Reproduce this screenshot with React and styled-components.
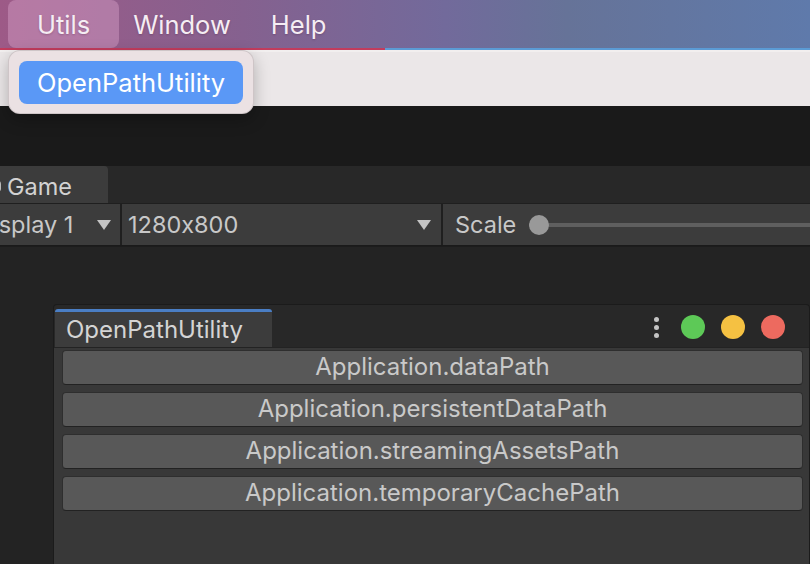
import React from "react";
import styled, { createGlobalStyle } from "styled-components";

const Global = createGlobalStyle`
  html, body { margin: 0; padding: 0; background: #191919; }
  body {
    font-family: Inter, "Noto Sans", sans-serif;
    font-feature-settings: "calt" 0;
  }
`;

const Screen = styled.div`
  position: relative;
  width: 810px;
  height: 564px;
  overflow: hidden;
  display: flex;
  flex-direction: column;
  background: #191919;
`;

/* ---------- system menu bar ---------- */
const MenuBar = styled.div`
  flex: none;
  height: 48px;
  display: flex;
  align-items: stretch;
  padding-left: 8px;
  background: linear-gradient(90deg, #9d5a87 0%, #85618f 30%, #726a9b 55%, #667398 70%, #5f7aab 100%);
`;

const MenuItem = styled.div`
  display: flex;
  align-items: center;
  padding: 0 ${(p) => (p.$active ? 29 : 20)}px;
  margin-right: ${(p) => (p.$active ? -6 : 0)}px;
  border-radius: 8px;
  background: ${(p) => (p.$active ? "rgba(215, 160, 200, 0.45)" : "transparent")};
  color: #f5edf3;
  font-size: 25.5px;
  text-shadow: 0 1px 2px rgba(60, 20, 50, 0.25);
`;

const MenuAccent = styled.div`
  flex: none;
  height: 2px;
  background: linear-gradient(90deg, #c23c5d 0, #c23c5d 385px, #5b9bd5 385px, #5b9bd5 100%);
`;

const Band = styled.div`
  flex: none;
  height: 56px;
  background: #ebe7e8;
  border-top: 2px solid #f2efef;
  box-sizing: border-box;
`;

const Gap = styled.div`
  flex: none;
  height: 60px;
  background: #1a1a1a;
`;

/* ---------- dropdown menu ---------- */
const Dropdown = styled.div`
  position: absolute;
  left: 8px;
  top: 50px;
  width: 246px;
  height: 64px;
  box-sizing: border-box;
  padding: 10px;
  border-radius: 12px;
  background: #ebe1e3;
  border: 1px solid rgba(0, 0, 0, 0.12);
  box-shadow: 0 6px 16px rgba(0, 0, 0, 0.25);
`;

const DropdownItem = styled.div`
  height: 43px;
  display: flex;
  align-items: center;
  padding-left: 18px;
  border-radius: 8px;
  background: #5a98f6;
  color: #ffffff;
  font-size: 25.5px;
`;

/* ---------- game view ---------- */
const GamePanel = styled.div`
  flex: none;
  margin-left: -40px;
  display: flex;
  flex-direction: column;
`;

const PanelTabs = styled.div`
  height: 37px;
  display: flex;
  background: #282828;
`;

const PanelTab = styled.div`
  width: 148px;
  display: flex;
  align-items: center;
  gap: 6px;
  padding: 3px 0 0 23px;
  box-sizing: border-box;
  background: #3c3c3c;
  border-top-right-radius: 4px;
  color: #d2d2d2;
  font-size: 23.5px;
`;

const Toolbar = styled.div`
  height: 41px;
  display: flex;
  align-items: stretch;
  background: #3c3c3c;
  border-top: 1px solid #1f1f1f;
  border-bottom: 1px solid #1a1a1a;
  color: #c8c8c8;
  font-size: 23.5px;
`;

const Select = styled.div`
  width: ${(p) => p.$w}px;
  box-sizing: border-box;
  display: flex;
  align-items: center;
  justify-content: space-between;
  padding: 0 ${(p) => p.$pr}px 0 ${(p) => p.$pl}px;
  border-right: 2px solid #1f1f1f;
`;

const Arrow = styled.span`
  width: 0;
  height: 0;
  border-left: 7px solid transparent;
  border-right: 7px solid transparent;
  border-top: 10px solid #c4c4c4;
`;

const ScaleGroup = styled.div`
  flex: 1;
  display: flex;
  align-items: center;
  padding-left: 12px;
`;

const Slider = styled.div`
  flex: 1;
  position: relative;
  height: 20px;
  margin-left: 13px;
  display: flex;
  align-items: center;
`;

const Track = styled.div`
  flex: 1;
  height: 4px;
  background: #5f5f5f;
`;

const Knob = styled.div`
  position: absolute;
  left: 0;
  top: 0;
  width: 20px;
  height: 20px;
  border-radius: 50%;
  background: #999999;
`;

/* ---------- scene area with floating editor window ---------- */
const Stage = styled.div`
  flex: 1;
  background: #232323;
  border-top: 1px solid #1c1c1c;
  padding: 57px 0 0 53px;
  display: flex;
  min-height: 0;
`;

const EditorWindow = styled.div`
  width: 755px;
  display: flex;
  flex-direction: column;
  background: #282828;
  border: 1px solid #1b1b1b;
  border-bottom: none;
  border-radius: 4px 4px 0 0;
`;

const WindowHeader = styled.div`
  height: 42px;
  display: flex;
  align-items: flex-end;
  justify-content: space-between;
  padding: 0 24px 0 1px;
`;

const WindowTab = styled.div`
  width: 217px;
  height: 38px;
  box-sizing: border-box;
  display: flex;
  align-items: center;
  padding-left: 11px;
  background: #3c3c3c;
  border-top: 3px solid #4a7ec4;
  border-radius: 3px 3px 0 0;
  color: #d4d4d4;
  font-size: 24px;
`;

const Controls = styled.div`
  align-self: center;
  display: flex;
  align-items: center;
  gap: 16px;
  margin-top: 2px;
`;

const Kebab = styled.div`
  display: flex;
  flex-direction: column;
  gap: 3px;
  margin-right: 6px;
  & > i {
    display: block;
    width: 5px;
    height: 5px;
    border-radius: 50%;
    background: #c4c4c4;
  }
`;

const Light = styled.div`
  width: 24px;
  height: 24px;
  border-radius: 50%;
  background: ${(p) => p.$c};
`;

const Content = styled.div`
  flex: 1;
  background: #383838;
  border-top: 1px solid #232323;
  padding: 2px 6px 0 8px;
  display: flex;
  flex-direction: column;
  gap: 7px;
`;

const PathButton = styled.button`
  height: 35px;
  box-sizing: border-box;
  margin: 0;
  padding: 0 0 2px;
  border: 1px solid #2e2e2e;
  border-bottom-color: #222222;
  border-radius: 4px;
  background: #585858;
  color: #c9c9c9;
  font-family: Inter, "Noto Sans", sans-serif;
  font-feature-settings: "calt" 0;
  font-size: 24px;
  text-align: center;
`;

const GameIcon = () => (
  <svg width="18" height="16" viewBox="0 0 18 16" fill="none">
    <path
      d="M4 3h10a3 3 0 0 1 3 3v5a2 2 0 0 1-3.4 1.4L11.5 10h-5l-2.1 2.4A2 2 0 0 1 1 11V6a3 3 0 0 1 3-3z"
      stroke="#c8c8c8"
      strokeWidth="1.8"
    />
  </svg>
);

const paths = [
  "Application.dataPath",
  "Application.persistentDataPath",
  "Application.streamingAssetsPath",
  "Application.temporaryCachePath",
];

export default function App() {
  return (
    <>
      <Global />
      <Screen>
        <MenuBar>
          <MenuItem $active>Utils</MenuItem>
          <MenuItem>Window</MenuItem>
          <MenuItem>Help</MenuItem>
        </MenuBar>
        <MenuAccent />
        <Band />
        <Gap />

        <GamePanel>
          <PanelTabs>
            <PanelTab>
              <GameIcon />
              Game
            </PanelTab>
          </PanelTabs>
          <Toolbar>
            <Select $w={162} $pl={16} $pr={9}>
              Display 1
              <Arrow />
            </Select>
            <Select $w={321} $pl={6} $pr={10}>
              1280x800
              <Arrow />
            </Select>
            <ScaleGroup>
              Scale
              <Slider>
                <Track />
                <Knob />
              </Slider>
            </ScaleGroup>
          </Toolbar>
        </GamePanel>

        <Stage>
          <EditorWindow>
            <WindowHeader>
              <WindowTab>OpenPathUtility</WindowTab>
              <Controls>
                <Kebab>
                  <i />
                  <i />
                  <i />
                </Kebab>
                <Light $c="#5dc957" />
                <Light $c="#f5c142" />
                <Light $c="#ed6a5f" />
              </Controls>
            </WindowHeader>
            <Content>
              {paths.map((p) => (
                <PathButton key={p}>{p}</PathButton>
              ))}
            </Content>
          </EditorWindow>
        </Stage>

        <Dropdown>
          <DropdownItem>OpenPathUtility</DropdownItem>
        </Dropdown>
      </Screen>
    </>
  );
}
